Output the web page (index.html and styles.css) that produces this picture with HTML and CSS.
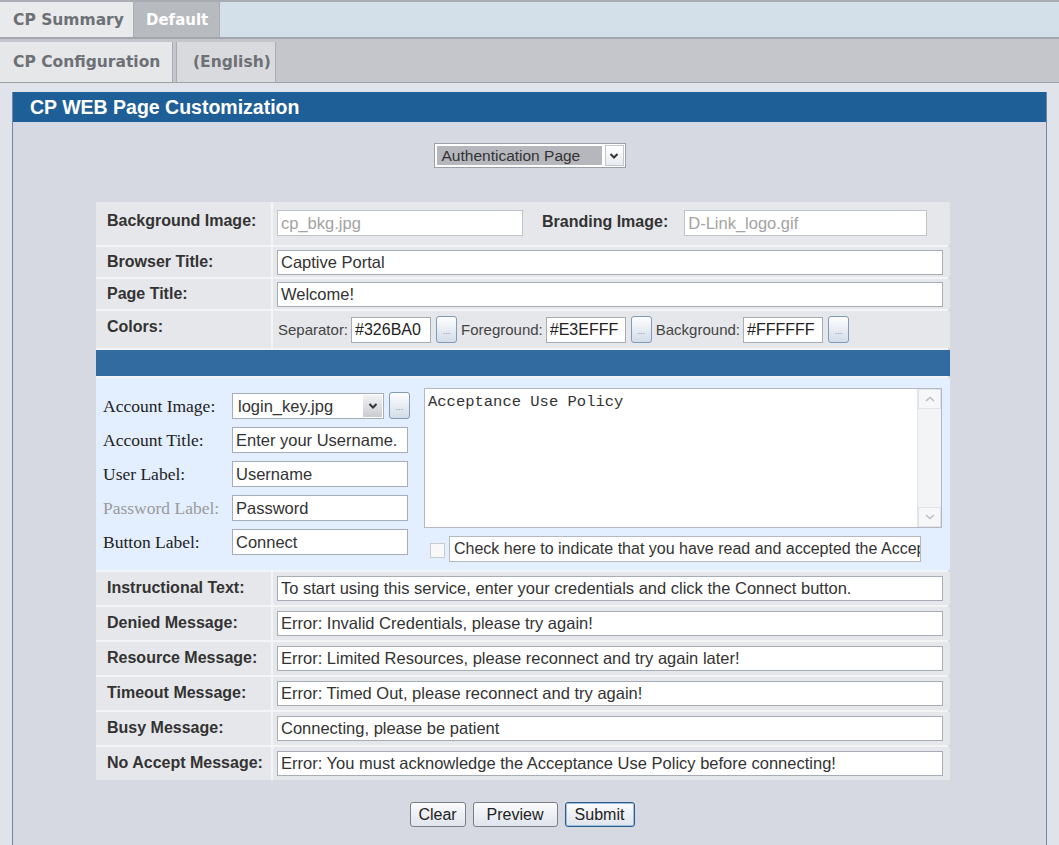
FILE: index.html
```html
<!DOCTYPE html>
<html lang="en">
<head>
    <meta charset="utf-8">
    <title>CP WEB Page Customization</title>
    <link rel="stylesheet" href="styles.css">
</head>
<body>
    <div class="tabbar tabbar-top">
        <div class="tab tab-summary">CP Summary</div>
        <div class="tab tab-active">Default</div>
    </div>
    <div class="tabbar tabbar-sub">
        <div class="tab tab-config">CP Configuration</div>
        <div class="tab tab-alt">(English)</div>
    </div>

    <div class="page">
        <div class="panel">
            <div class="panel-title">CP WEB Page Customization</div>
            <div class="panel-body">

                <div class="page-select">
                    <div class="select-value">Authentication Page</div>
                    <div class="select-arrow">
                        <svg width="10" height="8" viewBox="0 0 10 8"><path d="M1.5 2 L5 5.5 L8.5 2" fill="none" stroke="#333" stroke-width="2"/></svg>
                    </div>
                </div>

                <div class="form">
                    <!-- images -->
                    <div class="label label-tall">Background Image:</div>
                    <div class="value value-tall">
                        <input class="field field-off field-bkg" type="text" value="cp_bkg.jpg">
                        <span class="label-inline">Branding Image:</span>
                        <input class="field field-off field-brand" type="text" value="D-Link_logo.gif">
                    </div>

                    <div class="label">Browser Title:</div>
                    <div class="value"><input class="field field-wide" type="text" value="Captive Portal"></div>

                    <div class="label">Page Title:</div>
                    <div class="value"><input class="field field-wide" type="text" value="Welcome!"></div>

                    <!-- colors -->
                    <div class="label label-colors">Colors:</div>
                    <div class="value value-colors">
                        <span class="color-name">Separator:</span>
                        <input class="field field-color" type="text" value="#326BA0">
                        <span class="dots">...</span>
                        <span class="color-name">Foreground:</span>
                        <input class="field field-color" type="text" value="#E3EFFF">
                        <span class="dots">...</span>
                        <span class="color-name">Background:</span>
                        <input class="field field-color" type="text" value="#FFFFFF">
                        <span class="dots">...</span>
                    </div>

                    <div class="separator"></div>

                    <!-- preview of the login box -->
                    <div class="account">
                        <div class="account-fields">
                            <div class="acc-label">Account Image:</div>
                            <div class="acc-image">
                                <div class="acc-select">
                                    <span class="acc-select-text">login_key.jpg</span>
                                    <span class="acc-select-arrow">
                                        <svg width="10" height="8" viewBox="0 0 10 8"><path d="M1.5 2 L5 5.5 L8.5 2" fill="none" stroke="#333" stroke-width="2"/></svg>
                                    </span>
                                </div>
                                <span class="dots">...</span>
                            </div>

                            <div class="acc-label">Account Title:</div>
                            <input class="field acc-field" type="text" value="Enter your Username.">

                            <div class="acc-label">User Label:</div>
                            <input class="field acc-field" type="text" value="Username">

                            <div class="acc-label acc-label-off">Password Label:</div>
                            <input class="field acc-field" type="text" value="Password">

                            <div class="acc-label">Button Label:</div>
                            <input class="field acc-field" type="text" value="Connect">
                        </div>

                        <div class="account-policy">
                            <div class="policy">
                                <div class="policy-text">Acceptance Use Policy</div>
                                <div class="scrollbar">
                                    <div class="scroll-btn">
                                        <svg width="10" height="6" viewBox="0 0 10 6"><path d="M1 5 L5 1.5 L9 5" fill="none" stroke="#b9bdc4" stroke-width="1.5"/></svg>
                                    </div>
                                    <div class="scroll-track"></div>
                                    <div class="scroll-btn">
                                        <svg width="10" height="6" viewBox="0 0 10 6"><path d="M1 1 L5 4.5 L9 1" fill="none" stroke="#b9bdc4" stroke-width="1.5"/></svg>
                                    </div>
                                </div>
                            </div>
                            <div class="accept">
                                <span class="checkbox"></span>
                                <div class="accept-text">Check here to indicate that you have read and accepted the Acceptance Use Policy.</div>
                            </div>
                        </div>
                    </div>

                    <!-- messages -->
                    <div class="label label-msg">Instructional Text:</div>
                    <div class="value value-msg"><input class="field field-wide" type="text" value="To start using this service, enter your credentials and click the Connect button."></div>

                    <div class="label label-msg">Denied Message:</div>
                    <div class="value value-msg"><input class="field field-wide" type="text" value="Error: Invalid Credentials, please try again!"></div>

                    <div class="label label-msg">Resource Message:</div>
                    <div class="value value-msg"><input class="field field-wide" type="text" value="Error: Limited Resources, please reconnect and try again later!"></div>

                    <div class="label label-msg">Timeout Message:</div>
                    <div class="value value-msg"><input class="field field-wide" type="text" value="Error: Timed Out, please reconnect and try again!"></div>

                    <div class="label label-msg">Busy Message:</div>
                    <div class="value value-msg"><input class="field field-wide" type="text" value="Connecting, please be patient"></div>

                    <div class="label label-msg">No Accept Message:</div>
                    <div class="value value-msg"><input class="field field-wide" type="text" value="Error: You must acknowledge the Acceptance Use Policy before connecting!"></div>
                </div>

                <div class="actions">
                    <button class="btn btn-clear">Clear</button>
                    <button class="btn btn-preview">Preview</button>
                    <button class="btn btn-submit">Submit</button>
                </div>

            </div>
        </div>
    </div>
</body>
</html>
```

FILE: styles.css
```css
* {
    box-sizing: border-box;
}

body {
    margin: 0;
    background-color: #e0e3e9;
    font-family: "Liberation Sans", Arial, sans-serif;
    color: #333;
}

/* tab rows */
.tabbar {
    display: flex;
}

.tabbar-top {
    height: 39px;
    border-top: 2px solid #a9adb3;
    border-bottom: 2px solid #a3a6ac;
    background-color: #d3dfe9;
}

.tabbar-sub {
    height: 44px;
    padding-top: 3px;
    background-color: #c4c6cc;
    border-bottom: 1px solid #9ea1a7;
}

.tab {
    display: flex;
    align-items: center;
    padding-left: 13px;
    font-family: "DejaVu Sans", Verdana, sans-serif;
    font-weight: bold;
    font-size: 15.5px;
    color: #6d7075;
    background-color: #e9eaec;
    border-right: 1px solid #a9acb2;
}

.tab-summary {
    width: 134px;
}

.tab-active {
    width: 86px;
    padding-left: 12px;
    font-size: 15px;
    background-color: #b7babf;
    color: #fff;
}

.tab-config {
    width: 173px;
    background-color: #e6e7e9;
}

.tab-alt {
    width: 100px;
    margin-left: 3px;
    padding-left: 16px;
    background-color: #d9dadd;
    border-left: 1px solid #a9acb2;
}

/* main panel */
.page {
    padding: 9px 12px 0 12px;
}

.panel {
    min-height: 760px;
    background-color: #d6d9e2;
    border-left: 1px solid #7088a6;
    border-right: 1px solid #7088a6;
}

.panel-title {
    height: 30px;
    padding-left: 17px;
    line-height: 30px;
    font-size: 19.5px;
    font-weight: bold;
    color: #fff;
    background-color: #1f5f98;
}

.panel-body {
    padding-top: 21px;
}

.page-select {
    display: flex;
    width: 192px;
    height: 25px;
    margin: 0 auto;
    background-color: #fff;
    border: 1px solid #9aa0aa;
}

.select-value {
    flex: 1;
    margin: 2px;
    padding-left: 5px;
    line-height: 19px;
    font-size: 15.5px;
    color: #333;
    background-color: #b5b7bd;
}

.select-arrow {
    width: 19px;
    margin: 1px;
    display: flex;
    align-items: center;
    justify-content: center;
    border: 1px solid #c3c7ce;
    background: linear-gradient(#fff, #e8ebf0);
}

/* form grid */
.form {
    display: grid;
    grid-template-columns: 175px 677px;
    gap: 2px;
    width: 852px;
    margin: 34px 0 0 83px;
    background-color: #f3f4f6;
}

.label {
    padding: 6px 0 0 11px;
    font-size: 16px;
    font-weight: bold;
    color: #333;
    background-color: #e6e7ea;
}

.label-tall {
    padding-top: 10px;
}

.value {
    display: flex;
    align-items: center;
    height: 30px;
    padding: 0 5px 0 4px;
    background-color: #e6e7ea;
}

.value-tall {
    height: 43px;
    align-items: flex-start;
    padding-top: 8px;
}

.label-colors {
    padding-top: 7px;
}

.value-colors {
    height: 37px;
}

.label-msg {
    padding-top: 7px;
}

.value-msg {
    height: 33px;
}

.field {
    height: 25px;
    padding: 0 3px;
    border: 1px solid #a6adb6;
    background-color: #fff;
    font-family: "Liberation Sans", Arial, sans-serif;
    font-size: 16.5px;
    color: #333;
    outline: none;
}

.field-wide {
    width: 666px;
}

.field-off {
    color: #a3a3a3;
    border-color: #bfc3ca;
}

.field-bkg {
    width: 246px;
    height: 26px;
}

.field-brand {
    width: 243px;
    height: 26px;
}

.label-inline {
    margin: 3px 16px 0 19px;
    font-size: 16px;
    font-weight: bold;
    color: #333;
}

.color-name {
    margin-right: 3px;
    font-size: 15px;
    color: #444;
}

.color-name:first-child {
    margin-left: 1px;
}

.field-color {
    width: 80px;
    height: 26px;
    font-size: 16px;
    color: #222;
}

.dots {
    display: inline-flex;
    align-items: flex-end;
    justify-content: center;
    width: 21px;
    height: 27px;
    margin: 0 4px 0 5px;
    padding-bottom: 6px;
    font-size: 9px;
    line-height: 9px;
    color: #8090a4;
    border: 1px solid #7f9bb8;
    border-radius: 3px;
    background: linear-gradient(#fdfdfe, #d3dce8);
}

.separator {
    grid-column: 1 / -1;
    height: 26px;
    background-color: #326ba0;
}

/* login box preview */
.account {
    grid-column: 1 / -1;
    display: flex;
    height: 192px;
    padding: 10px 8px 0 7px;
    background-color: #e3efff;
}

.account-fields {
    display: grid;
    grid-template-columns: 129px 176px;
    grid-auto-rows: 26px;
    row-gap: 8px;
    align-content: start;
    margin-top: 5px;
}

.acc-label {
    display: flex;
    align-items: center;
    font-family: "Liberation Serif", "Times New Roman", serif;
    font-size: 17.5px;
    color: #222;
    white-space: nowrap;
}

.acc-label-off {
    color: #9a9a9a;
}

.acc-image {
    display: flex;
    width: 182px;
}

.acc-select {
    display: flex;
    width: 152px;
    height: 26px;
    border: 1px solid #a6adb6;
    background-color: #fff;
}

.acc-select-text {
    flex: 1;
    padding-left: 5px;
    line-height: 24px;
    font-size: 16.5px;
    color: #333;
}

.acc-select-arrow {
    display: flex;
    align-items: center;
    justify-content: center;
    width: 19px;
    margin: 1px;
    background: linear-gradient(#f3f3f4, #c9cbd0);
}

.acc-image .dots {
    margin: -1px 0 0 5px;
}

.acc-field {
    width: 176px;
    height: 26px;
    font-size: 16.5px;
}

.account-policy {
    flex: 1;
    margin-left: 16px;
}

.policy {
    display: flex;
    height: 140px;
    border: 1px solid #b4b9c1;
    background-color: #fff;
}

.policy-text {
    flex: 1;
    padding: 4px 3px;
    font-family: "Liberation Mono", "Courier New", monospace;
    font-size: 15.5px;
    color: #333;
}

.scrollbar {
    display: flex;
    flex-direction: column;
    width: 24px;
    background-color: #f3f4f6;
    border-left: 1px solid #e2e4e8;
}

.scroll-btn {
    display: flex;
    align-items: center;
    justify-content: center;
    height: 20px;
    border: 1px solid #e0e3e8;
    background-color: #f6f7f9;
}

.scroll-track {
    flex: 1;
}

.accept {
    display: flex;
    align-items: center;
    margin-top: 8px;
}

.checkbox {
    width: 15px;
    height: 15px;
    margin: 2px 4px 0 6px;
    border: 1px solid #c8ccd2;
    background-color: #f8f8f8;
}

.accept-text {
    width: 472px;
    height: 26px;
    padding-left: 4px;
    line-height: 24px;
    font-size: 16px;
    color: #333;
    white-space: nowrap;
    overflow: hidden;
    border: 1px solid #b4b9c1;
    background-color: #fff;
}

/* buttons */
.actions {
    display: flex;
    justify-content: center;
    gap: 7px;
    width: 852px;
    margin: 22px 0 0 83px;
}

.btn {
    height: 25px;
    padding: 0 6px;
    font-family: "Liberation Sans", Arial, sans-serif;
    font-size: 16px;
    color: #222;
    border: 1px solid #7a7f87;
    border-radius: 3px;
    background: linear-gradient(#fbfbfc, #dfe4ec);
}

.btn-clear {
    width: 56px;
}

.btn-preview {
    width: 85px;
}

.btn-submit {
    width: 70px;
    border-color: #2d5b88;
    box-shadow: inset 0 0 0 1px #9cc0e3;
}
```
